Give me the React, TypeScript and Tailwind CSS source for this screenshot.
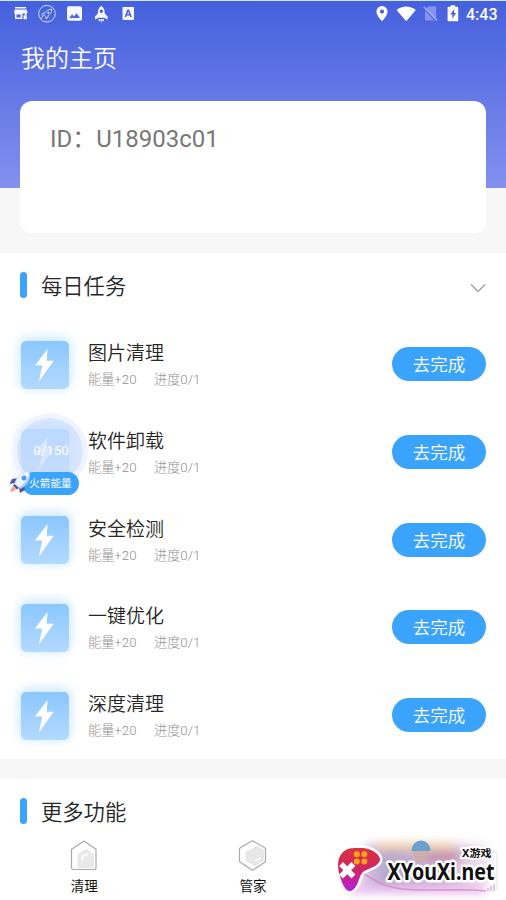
const tasks = ["图片清理", "软件卸载", "安全检测", "一键优化", "深度清理"];

function StatusBar() {
  return (
    <div className="flex h-[26px] items-center border-t border-[#cfe6ff] text-white">
      <svg className="ml-[13px]" width="124" height="20" viewBox="13 4 124 20" fill="#f4f7ff">
        <path d="M15 7h11v1.6H15zM14.6 9.5h12l1 3.6h-1v2h-1.700v-1.500h-2.500v5.500H15v-5.500h-1zM16.500 14.500v3h4.200v-3zM23.600 15.300h3.200v4h-3.200z" fillRule="evenodd" />
        <circle cx="47" cy="13.700" r="8.300" fill="none" stroke="#cbdcff" strokeWidth="1" />
        <path d="M51.800 9.200c-3.300.1-5.100 1.500-6.500 3.600l-2.200.4-1.200 1.700 2.400.2 1.500 1.600.2 2.200 1.800-1.200.3-2.100c2.100-1.500 3.600-3 3.700-6.400zM42.800 16l-1.600 2.600" fill="none" stroke="#dbe7ff" strokeWidth=".9" />
        <circle cx="48.400" cy="12.700" r=".9" />
        <path d="M69 6.200h11a2 2 0 0 1 2 2v10.600a2 2 0 0 1-2 2H69a2 2 0 0 1-2-2V8.200a2 2 0 0 1 2-2zM69.200 18h10.800l-3.400-4.800-2.600 3.200-1.900-2.200z" fillRule="evenodd" />
        <path d="M101.300 5.700c2.800 2.200 3.600 4.500 3.300 7.600l3 3.200v3l-3.500-1.700h-5.600L95 19.500v-3l3-3.200c-.3-3.100.5-5.400 3.300-7.600zM101.300 9.600a1.700 1.700 0 1 0 0 3.400 1.700 1.700 0 0 0 0-3.400z" fillRule="evenodd" />
        <path d="M98.600 19h1.600v2h-1.600zM100.800 19h1.100v3.200h-1.100zM102.500 19h1.500v2h-1.500z" />
        <path d="M123.500 7H133a1 1 0 0 1 1 1v11a1 1 0 0 1-1 1h-9.500a1 1 0 0 1-1-1V8a1 1 0 0 1 1-1zM127.300 9.500l-2.700 7.400h1.700l.5-1.500h2.900l.5 1.500h1.700l-2.800-7.400zM128.200 11.600l.9 2.500h-1.800z" fillRule="evenodd" />
      </svg>
      <svg className="ml-auto" width="90" height="20" viewBox="372 4 90 20" fill="#fff">
        <path d="M382 6a5.600 5.600 0 0 0-5.600 5.600c0 4.200 5.600 9.700 5.600 9.700s5.600-5.500 5.600-9.700A5.600 5.600 0 0 0 382 6zM382 9.500a2.100 2.100 0 1 1 0 4.200 2.100 2.100 0 0 1 0-4.200z" fillRule="evenodd" />
        <path d="M396.600 10c5.500-4.700 13.700-4.700 19.200 0l-9.600 11.200z" />
        <path d="M428.500 6.200h7.600v14.300H425V9.700z" fill="#8593ee" />
        <path d="M423 7.700L436.500 21.500" stroke="#4d68df" strokeWidth="1.300" />
        <path d="M423.700 6.700L437.200 20.500" stroke="#a6b2f6" strokeWidth="1.200" />
        <path d="M450.600 5.300h4.500v1.500h2.300a.8.800 0 0 1 .8.800v12.800a.8.800 0 0 1-.8.800h-9a.8.800 0 0 1-.8-.8V7.600c0-.5.300-.8.800-.8h2.200zM454.200 9l-4 5.500h2.200v4.300l3.700-5.700h-2z" fillRule="evenodd" />
      </svg>
      <span className="mt-[2px] ml-[4px] w-[40px] font-[Roboto] text-[16px] leading-none font-medium">4:43</span>
    </div>
  );
}

function SectionTitle({ title }: { title: string }) {
  return (
    <div className="flex items-center text-[21.3px] leading-8 font-[350] text-[#262626]">
      <span className="mr-[14px] h-[26px] w-[7px] rounded-full bg-[#3aa3fb]" />
      <span className="pt-[4px]">{title}</span>
    </div>
  );
}

function EnergyIcon() {
  return (
    <div className="flex size-12 shrink-0 items-center justify-center rounded-[5px] bg-linear-to-b from-[#8ac7ff] to-[#b3d9ff] shadow-[0_-2px_12px_1px_#c4e6ff]">
      <svg width="48" height="48" viewBox="0 0 48 48" fill="#fff">
        <path d="M26.500 8L14 24.500h7.200L18 40.500 32.700 19.800h-7z" />
      </svg>
    </div>
  );
}

function TaskRow({ name }: { name: string }) {
  return (
    <li className="flex h-[87.700px] items-center pr-5 pl-[21px]">
      <EnergyIcon />
      <div className="ml-[19px] pt-[5px]">
        <div className="text-[19px] leading-[26px] font-[350] text-[#262626]">{name}</div>
        <div className="flex text-[13.200px] leading-[26px] font-light text-[#929292]">
          <span className="w-[66px]">能量+20</span>
          <span>进度0/1</span>
        </div>
      </div>
      <button className="mb-px ml-auto h-[34px] w-[94px] rounded-full bg-[#3aa3fb] pt-[2px] text-[17.500px] leading-[32px] font-[350] text-white">
        去完成
      </button>
    </li>
  );
}

function RocketBadge() {
  return (
    <div className="absolute top-[413px] left-[8px] h-[88px] w-[80px]">
      <div className="ml-[4px] flex size-[76px] items-center justify-center rounded-full border-[5px] border-[#edf1ff]/80 bg-[#cbdefe]/75 bg-clip-padding text-[13.300px] text-white">
        <span className="ml-[2px]">0/150</span>
      </div>
      <div className="absolute top-[59px] left-[14px] h-[23px] w-[57px] rounded-full bg-[#3aa3fb] pl-[7px] text-[10.700px] leading-[24px] whitespace-nowrap text-white">
        火箭能量
      </div>
      <svg className="absolute top-[57px] left-0" width="25" height="25" viewBox="0 0 25 25">
        <path d="M10 8L4 9l-2.500 5 6-1zM16 15l1 5-5 3-1-5z" fill="#5058a5" />
        <path d="M21 2c-6-1-12 4-14.500 12l4.500 4c7-2 12-8 10-16z" fill="#eef5ff" stroke="#bad7f7" strokeWidth=".7" />
        <path d="M11 17c4-2 8-6 10-12 1 6-3 12-9 14z" fill="#a9cef6" />
        <circle cx="16" cy="8" r="2.500" fill="#4c9bf0" />
        <path d="M6.500 14l4.500 4-2 1.500-4-4z" fill="#4f5295" />
        <path d="M5 16l3.300 3L4 22l-2-1z" fill="#f3a087" />
      </svg>
    </div>
  );
}

function Watermark() {
  return (
    <svg className="absolute top-[826px] left-[320px]" width="186" height="74" viewBox="320 826 186 74">
      <defs>
        <linearGradient id="pad" x2="0" y2="1">
          <stop stopColor="#d9333f" />
          <stop offset=".5" stopColor="#cf2462" />
          <stop offset="1" stopColor="#b421df" />
        </linearGradient>
        <linearGradient id="haze" x2="1" y2="0">
          <stop stopColor="#e3c9ea" />
          <stop offset=".2" stopColor="#b5a6cc" />
          <stop offset=".65" stopColor="#d4b5d6" />
          <stop offset="1" stopColor="#f8eef9" />
        </linearGradient>
        <filter id="soft" x="-20%" y="-40%" width="140%" height="180%">
          <feGaussianBlur stdDeviation="4" />
        </filter>
      </defs>
      <g filter="url(#soft)">
        <rect x="360" y="844" width="132" height="47" rx="12" fill="url(#haze)" />
        <rect x="376" y="842" width="78" height="9" fill="#ecd0b4" />
        <rect x="426" y="852" width="34" height="9" fill="#c08aa8" />
        <rect x="350" y="885" width="134" height="9" fill="#e8c0ef" />
      </g>
      <path d="M411.500 851a9.500 10.500 0 0 1 19 0z" fill="#6a9fcf" />
      <path d="M413 851h16l-3 11h-10z" fill="#cdaba0" opacity=".7" />
      <path d="M362 873c12 6 20 14 41 16 24 3 55-1 83 2" fill="none" stroke="#d477b5" strokeWidth="1.500" opacity=".65" />
      <path d="M490 850c6 0 7 3 7 10v30" fill="none" stroke="#e7dfec" />
      <path d="M343 852c5-5 12-4 19-4 8 0 17 5 18 11 0 8-13 9-18 14-4 6-4 15-11 18-6 1-9-8-11-15-3-9-3-18 3-24z" fill="url(#pad)" stroke="#fff" strokeWidth="5" strokeLinejoin="round" />
      <path d="M343 852c5-5 12-4 19-4 8 0 17 5 18 11 0 8-13 9-18 14-4 6-4 15-11 18-6 1-9-8-11-15-3-9-3-18 3-24z" fill="url(#pad)" />
      <g fill="#ffa31a">
        <circle cx="356.800" cy="854.300" r="3" />
        <circle cx="364.300" cy="854.300" r="3" />
        <circle cx="356.800" cy="861.500" r="3" />
        <circle cx="364.300" cy="861.500" r="3" />
      </g>
      <path d="M343 866l8.500 8.500m0-8.500l-8.500 8.500" stroke="#fff" strokeWidth="5.500" strokeLinecap="square" />
      <g fill="#101010" stroke="#fff" strokeLinejoin="round" paintOrder="stroke" fontWeight="700">
        <text x="462" y="856.500" fontSize="10" strokeWidth="4" textLength="29.500" lengthAdjust="spacingAndGlyphs" fontFamily="'Noto Sans', 'Noto Sans CJK SC', sans-serif">X游戏</text>
        <text x="387.500" y="879.500" fontSize="24" strokeWidth="5" textLength="107" lengthAdjust="spacingAndGlyphs" fontFamily="'Noto Sans', sans-serif">XYouXi.net</text>
      </g>
      <path d="M488 891v-3m3 3v-5m3 5v-7" stroke="#cf8cc6" strokeWidth="1" />
    </svg>
  );
}

function BottomNav() {
  return (
    <nav className="flex h-[66px] bg-white text-[13.500px] leading-[18px] text-[#111]">
      <div className="flex w-[168.700px] flex-col items-center pt-[5px]">
        <svg width="30" height="34" viewBox="0 0 30 34">
          <path d="M15 2l12 8.200v18.300a2 2 0 0 1-2 2H4.500a2 2 0 0 1-2-2V10.200z" fill="#fff" stroke="#aaa" strokeWidth="1.200" strokeLinejoin="round" />
          <path d="M8.500 15l9-5 7.500 5v14H8.500z" fill="#e9e9e9" />
          <path d="M13 21l1-4 5-2" fill="none" stroke="#fff" strokeWidth="1.500" />
        </svg>
        <span className="mt-[4px]">清理</span>
      </div>
      <div className="flex w-[168.700px] flex-col items-center pt-[5px]">
        <svg width="30" height="34" viewBox="0 0 30 34">
          <path d="M14 2q.5-.3 1 0l11.700 6.800q.8.500.8 1.500v11.400q0 1-.8 1.500L15 31q-.5.300-1 0L2.300 23.200q-.8-.5-.8-1.500V10.300q0-1 .8-1.500z" fill="#fff" stroke="#aaa" strokeWidth="1.200" />
          <path d="M7.500 13l12-6 6.500 4v10.500L17 27 7.500 22z" fill="#e7e7e7" />
          <path d="M17 21.500q4 0 5.500-3" fill="none" stroke="#fff" strokeWidth="1.600" />
        </svg>
        <span className="mt-[4px]">管家</span>
      </div>
    </nav>
  );
}

export default function App() {
  return (
    <div className="relative flex h-[900px] w-[506px] flex-col overflow-hidden bg-white font-[Roboto,'Noto_Sans_CJK_SC',sans-serif]">
      <header className="h-[253px] shrink-0 bg-[#f7f7f7] bg-[linear-gradient(#4560dd,#8390ef)] bg-[length:100%_188px] bg-no-repeat">
        <StatusBar />
        <h1 className="mt-[15px] ml-[21px] text-[24px] leading-[36px] font-[350] text-white">我的主页</h1>
        <div className="mx-5 mt-[24px] h-[132px] rounded-xl bg-white pt-[20px] pl-[30px] text-[24px] leading-[36px] text-[#777]">
          ID：U18903c01
        </div>
      </header>

      <section className="h-[506px] shrink-0 pt-[14px]">
        <div className="flex items-center justify-between pr-5 pl-5">
          <SectionTitle title="每日任务" />
          <svg className="mt-[6px]" width="16" height="10" viewBox="0 0 16 10" fill="none" stroke="#a4a4a4" strokeWidth="1.500">
            <path d="M1 1.500l7 7 7-7" />
          </svg>
        </div>
        <ul className="mt-[18px]">
          {tasks.map((name) => (
            <TaskRow key={name} name={name} />
          ))}
        </ul>
      </section>

      <div className="h-5 shrink-0 bg-[#f7f7f7]" />

      <section className="h-[55px] shrink-0 pt-[14px] pl-5">
        <SectionTitle title="更多功能" />
      </section>

      <BottomNav />
      <RocketBadge />
      <Watermark />
    </div>
  );
}
